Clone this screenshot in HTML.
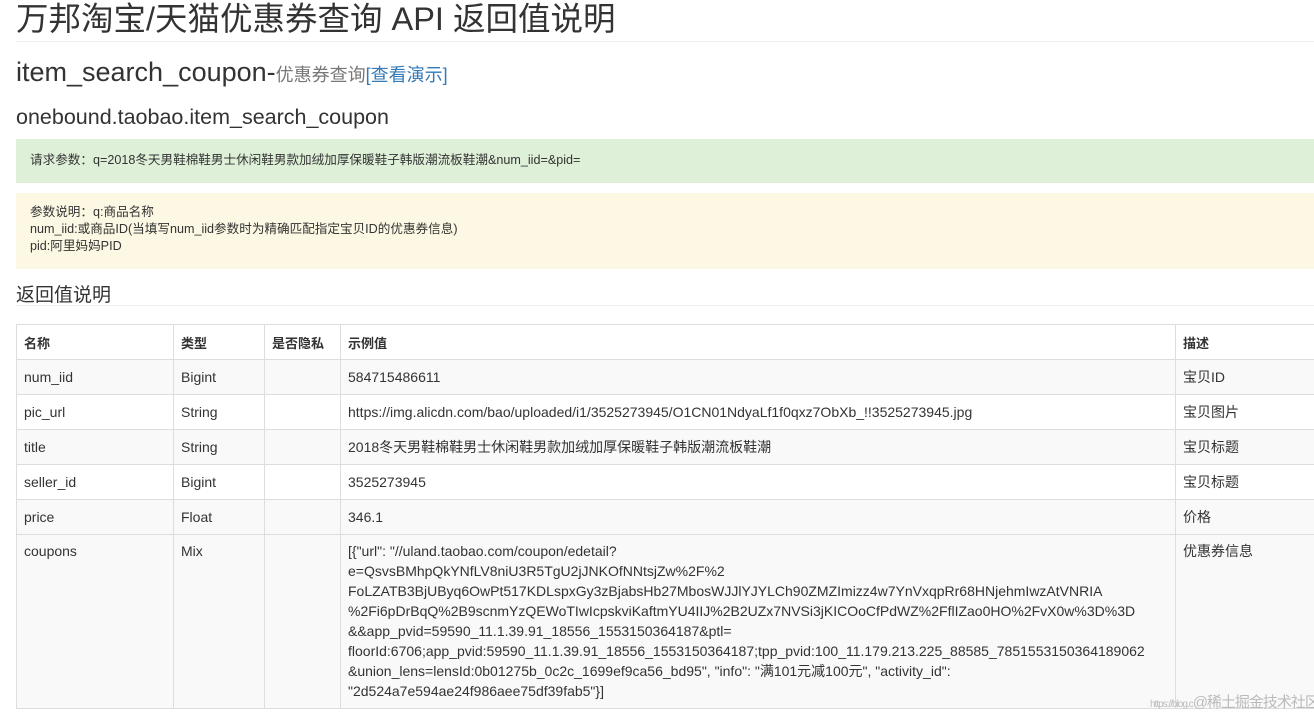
<!DOCTYPE html>
<html><head><meta charset="utf-8"><style>
body{margin:0;background:#fff;font-family:"Liberation Sans","Noto Sans CJK SC",sans-serif;color:#333;width:1314px;height:718px;overflow:hidden;position:relative}
h1{position:absolute;left:16px;top:-7px;margin:0;font-size:32.5px;font-weight:normal;white-space:nowrap}
.hr1{position:absolute;left:16px;top:41px;width:1298px;height:1px;background:#eee}
h2{position:absolute;left:16px;top:57px;margin:0;font-size:27px;font-weight:normal;white-space:nowrap}
h2 small{font-size:18px;color:#777}
h2 a{color:#337ab7;text-decoration:none}
h3{position:absolute;left:16px;top:105px;margin:0;font-size:21.5px;font-weight:normal;white-space:nowrap}
.g{position:absolute;left:16px;top:139px;width:1298px;height:44px;background:#dff0d8;font-size:12.6px;box-sizing:border-box;padding:13px 14px;line-height:17px;white-space:nowrap}
.y{position:absolute;left:16px;top:193px;width:1298px;height:76px;background:#fcf8e3;font-size:12.6px;box-sizing:border-box;padding:11px 14px;line-height:17px;white-space:nowrap}
h4{position:absolute;left:16px;top:280px;margin:0;font-size:19px;font-weight:normal}
.hr2{position:absolute;left:16px;top:305px;width:1298px;height:1px;background:#eee}
table{position:absolute;left:16px;top:324px;border-collapse:collapse;font-size:14px;width:1299px;table-layout:fixed}
td,th{border:1px solid #ddd;padding:0 7px;height:34px;vertical-align:middle;text-align:left}
th{font-weight:bold;font-size:13px}
tr.s td{background:#f9f9f9}
td.cp{vertical-align:top;padding-top:6px;line-height:20px;height:167px;white-space:nowrap}
.wm{position:absolute;left:1150px;top:691px;font-size:15px;color:#bbb;white-space:nowrap;letter-spacing:-1px}
.wm span{font-size:10px}
</style></head><body>
<h1>万邦淘宝/天猫优惠券查询 API 返回值说明</h1>
<div class="hr1"></div>
<h2>item_search_coupon-<small>优惠券查询<a>[查看演示]</a></small></h2>
<h3>onebound.taobao.item_search_coupon</h3>
<div class="g">请求参数：q=2018冬天男鞋棉鞋男士休闲鞋男款加绒加厚保暖鞋子韩版潮流板鞋潮&amp;num_iid=&amp;pid=</div>
<div class="y">参数说明：q:商品名称<br>num_iid:或商品ID(当填写num_iid参数时为精确匹配指定宝贝ID的优惠券信息)<br>pid:阿里妈妈PID</div>
<h4>返回值说明</h4>
<div class="hr2"></div>
<table>
<colgroup><col style="width:157px"><col style="width:91px"><col style="width:76px"><col style="width:835px"><col></colgroup>
<tr><th>名称</th><th>类型</th><th>是否隐私</th><th>示例值</th><th>描述</th></tr>
<tr class="s"><td>num_iid</td><td>Bigint</td><td></td><td>584715486611</td><td>宝贝ID</td></tr>
<tr><td>pic_url</td><td>String</td><td></td><td>https://img.alicdn.com/bao/uploaded/i1/3525273945/O1CN01NdyaLf1f0qxz7ObXb_!!3525273945.jpg</td><td>宝贝图片</td></tr>
<tr class="s"><td>title</td><td>String</td><td></td><td>2018冬天男鞋棉鞋男士休闲鞋男款加绒加厚保暖鞋子韩版潮流板鞋潮</td><td>宝贝标题</td></tr>
<tr><td>seller_id</td><td>Bigint</td><td></td><td>3525273945</td><td>宝贝标题</td></tr>
<tr class="s"><td>price</td><td>Float</td><td></td><td>346.1</td><td>价格</td></tr>
<tr class="s"><td class="cp">coupons</td><td class="cp">Mix</td><td class="cp"></td><td class="cp">[{"url": "//uland.taobao.com/coupon/edetail?<br>e=QsvsBMhpQkYNfLV8niU3R5TgU2jJNKOfNNtsjZw%2F%2<br>FoLZATB3BjUByq6OwPt517KDLspxGy3zBjabsHb27MbosWJJlYJYLCh90ZMZImizz4w7YnVxqpRr68HNjehmIwzAtVNRIA<br>%2Fi6pDrBqQ%2B9scnmYzQEWoTIwIcpskviKaftmYU4IIJ%2B2UZx7NVSi3jKICOoCfPdWZ%2FflIZao0HO%2FvX0w%3D%3D<br>&amp;&amp;app_pvid=59590_11.1.39.91_18556_1553150364187&amp;ptl=<br>floorId:6706;app_pvid:59590_11.1.39.91_18556_1553150364187;tpp_pvid:100_11.179.213.225_88585_7851553150364189062<br>&amp;union_lens=lensId:0b01275b_0c2c_1699ef9ca56_bd95", "info": "满101元减100元", "activity_id":<br>"2d524a7e594ae24f986aee75df39fab5"}]</td><td class="cp">优惠券信息</td></tr>
</table>
<div class="wm"><span>https://blog.c</span>@稀土掘金技术社区</div>
</body></html>
